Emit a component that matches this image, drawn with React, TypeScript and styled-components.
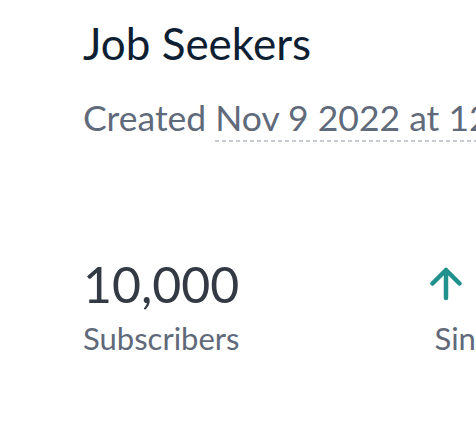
import React from "react";
import styled, { createGlobalStyle } from "styled-components";

const GlobalStyle = createGlobalStyle`
  html, body {
    margin: 0;
    padding: 0;
    background: #ffffff;
    overflow: hidden;
  }
  body {
    font-family: Lato, "Open Sans", sans-serif;
  }
`;

const Page = styled.div`
  width: 476px;
  height: 424px;
  overflow: hidden;
  padding: 17px 0 0 83px;
  box-sizing: border-box;
`;

const Title = styled.h1`
  margin: 0;
  font-size: 44px;
  font-weight: 400;
  line-height: 52px;
  color: #0f1f33;
  white-space: nowrap;
`;

const Meta = styled.p`
  margin: 27px 0 0;
  font-size: 35.5px;
  line-height: 44px;
  color: #5f6a7b;
  white-space: nowrap;
`;

const DateText = styled.span`
  padding-bottom: 3px;
  background-image: repeating-linear-gradient(
    to right,
    #c6cad1 0,
    #c6cad1 4px,
    transparent 4px,
    transparent 7px
  );
  background-size: 100% 2px;
  background-position: left bottom;
  background-repeat: no-repeat;
`;

const Stats = styled.div`
  display: flex;
  gap: 195px;
  margin-top: 114px;
`;

const Stat = styled.div`
  display: flex;
  flex-direction: column;
  flex-shrink: 0;
  white-space: nowrap;
`;

const Value = styled.div`
  display: flex;
  align-items: center;
  gap: 10px;
  font-size: 50px;
  line-height: 60px;
  color: #343a44;
`;

const Label = styled.div`
  margin-top: 5px;
  font-size: 31px;
  line-height: 38px;
  color: #606979;
`;

const ArrowIcon = styled.svg`
  margin-left: -4px;
  flex-shrink: 0;
`;

function ArrowUp() {
  return (
    <ArrowIcon width="32" height="34" viewBox="0 0 32 34" fill="none">
      <path
        d="M16 31V3M2.5 16.5L16 3L29.5 16.5"
        stroke="#20918c"
        strokeWidth="4.5"
        strokeLinecap="round"
        strokeLinejoin="round"
      />
    </ArrowIcon>
  );
}

export default function App() {
  return (
    <>
      <GlobalStyle />
      <Page>
        <Title>Job Seekers</Title>
        <Meta>
          Created <DateText>Nov 9 2022 at 12:00 PM</DateText>
        </Meta>
        <Stats>
          <Stat>
            <Value>10,000</Value>
            <Label>Subscribers</Label>
          </Stat>
          <Stat>
            <Value>
              <ArrowUp />
              12%
            </Value>
            <Label>Since last week</Label>
          </Stat>
        </Stats>
      </Page>
    </>
  );
}
